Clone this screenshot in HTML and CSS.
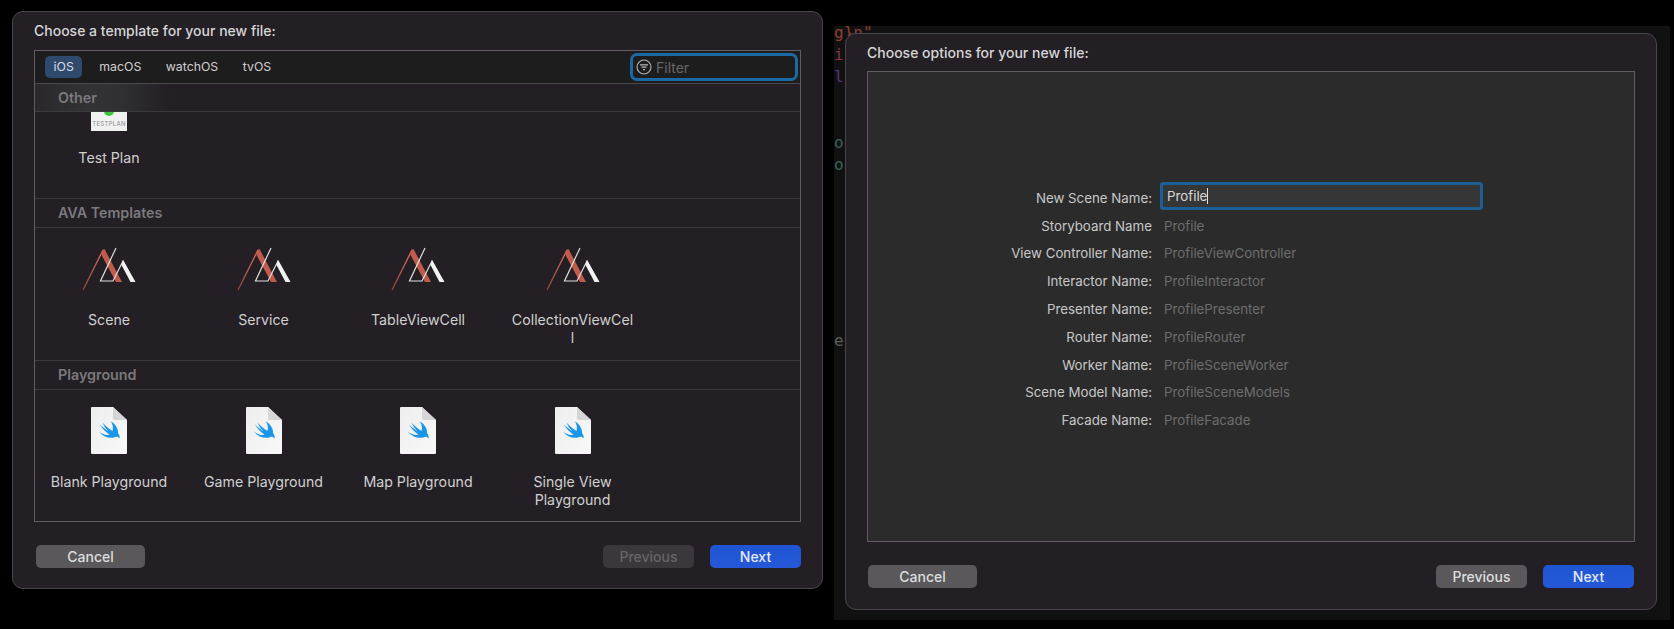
FILE: index.html
```html
<!DOCTYPE html>
<html lang="en">
<head>
  <meta charset="UTF-8" />
  <title>New file</title>
  <link rel="stylesheet" href="styles.css">
</head>
<body>
  <svg class="defs" width="0" height="0">
    <defs>
      <linearGradient id="red" x1="0" y1="1" x2="0.4" y2="0">
        <stop offset="0" stop-color="#8f4a3e" />
        <stop offset="1" stop-color="#d0675a" />
      </linearGradient>
      <linearGradient id="page" x1="0" y1="0" x2="1" y2="1">
        <stop offset="0" stop-color="#eeeeef" />
        <stop offset="1" stop-color="#f8f8f8" />
      </linearGradient>
      <symbol id="logo" viewBox="11 4 56 47">
        <path d="M13 49 L33 9" stroke="url(#red)" stroke-width="1.3" fill="none" />
        <path d="M32 9 L34.5 8 L52 41 L46 41 L31 13 Z" fill="#c05c4c" />
        <path d="M46 7 L30.5 40 L43 40 L53 20 L64 40.5" stroke="#e0e0e0" stroke-width="1.2" fill="none" />
        <path d="M53 19 L65.5 41 L60.5 41 L51.5 24 Z" fill="#f2f2f2" />
      </symbol>
      <symbol id="swiftdoc" viewBox="0 0 36 47">
        <path d="M0 1 Q0 0 1 0 L22 0 L36 13 L36 46 Q36 47 35 47 L1 47 Q0 47 0 46 Z" fill="url(#page)" />
        <path d="M22 0 L36 13 L24 13 Q22 13 22 11 Z" fill="#d6d6d8" />
        <g transform="translate(7.5 14)">
          <path d="M0.5 10.5 C4 13.5 8 14.5 11 13.5 C7 11 3.5 7 1.5 3.5 C4.5 6.5 8 9 10 10.5 C7.5 8 5.5 5 4 1.5 C7 5 10.5 8 14 10 C15 6 14 3 12.5 0.5 C17 3 20 8 19.5 12 C21 14 21.5 16 21 17.5 C19.5 15.5 18 15.5 16.5 16.2 C11 18 4.5 16 0.5 10.5 Z" fill="#1b96e6" />
        </g>
      </symbol>
    </defs>
  </svg>

  <div class="dialog dialog-template">
    <h2 class="title">Choose a template for your new file:</h2>
    <div class="panel">
      <div class="toolbar">
        <div class="tabs">
          <span class="tab tab-active">iOS</span>
          <span class="tab">macOS</span>
          <span class="tab">watchOS</span>
          <span class="tab">tvOS</span>
        </div>
        <div class="filter">
          <svg class="filter-icon" viewBox="0 0 16 16" width="16" height="16">
            <circle cx="8" cy="8" r="7" stroke="#b5b5b5" stroke-width="1.1" fill="none" />
            <path d="M4 5.8H12M5.5 8.2H10.5M7 10.6H9" stroke="#b5b5b5" stroke-width="1.2" />
          </svg>
          <span>Filter</span>
        </div>
      </div>

      <div class="section-head section-head-other">Other</div>
      <div class="items items-other">
        <div class="item">
          <div class="testplan">
            <span class="testplan-dot"></span>
            <span class="testplan-text">TESTPLAN</span>
          </div>
          <div class="item-label">Test Plan</div>
        </div>
      </div>

      <div class="section-head">AVA Templates</div>
      <div class="items">
        <div class="item">
          <svg class="icon"><use href="#logo" /></svg>
          <div class="item-label">Scene</div>
        </div>
        <div class="item">
          <svg class="icon"><use href="#logo" /></svg>
          <div class="item-label">Service</div>
        </div>
        <div class="item">
          <svg class="icon"><use href="#logo" /></svg>
          <div class="item-label">TableViewCell</div>
        </div>
        <div class="item">
          <svg class="icon"><use href="#logo" /></svg>
          <div class="item-label">CollectionViewCel<br>l</div>
        </div>
      </div>

      <div class="section-head">Playground</div>
      <div class="items">
        <div class="item">
          <svg class="icon"><use href="#swiftdoc" /></svg>
          <div class="item-label">Blank Playground</div>
        </div>
        <div class="item">
          <svg class="icon"><use href="#swiftdoc" /></svg>
          <div class="item-label">Game Playground</div>
        </div>
        <div class="item">
          <svg class="icon"><use href="#swiftdoc" /></svg>
          <div class="item-label">Map Playground</div>
        </div>
        <div class="item">
          <svg class="icon"><use href="#swiftdoc" /></svg>
          <div class="item-label">Single View<br>Playground</div>
        </div>
      </div>
    </div>
    <div class="footer footer-template">
      <button class="btn">Cancel</button>
      <div class="footer-right">
        <button class="btn btn-disabled">Previous</button>
        <button class="btn btn-next">Next</button>
      </div>
    </div>
  </div>

  <div class="backdrop">
    <div class="code">
      <span class="c-red">g}n"</span>
      <span class="c-pink">i</span>
      <span class="c-purple">l</span>
      <span></span>
      <span></span>
      <span class="c-green">o</span>
      <span class="c-green">o</span>
      <span></span><span></span><span></span><span></span><span></span><span></span><span></span>
      <span class="c-grey">e</span>
    </div>
    <div class="dialog dialog-options">
      <h2 class="title title-options">Choose options for your new file:</h2>
      <div class="panel panel-options">
        <div class="form">
          <div class="form-label">New Scene Name:</div>
          <div class="name-input">Profile<span class="caret"></span></div>
          <div class="form-label">Storyboard Name</div>
          <div class="form-value">Profile</div>
          <div class="form-label">View Controller Name:</div>
          <div class="form-value">ProfileViewController</div>
          <div class="form-label">Interactor Name:</div>
          <div class="form-value">ProfileInteractor</div>
          <div class="form-label">Presenter Name:</div>
          <div class="form-value">ProfilePresenter</div>
          <div class="form-label">Router Name:</div>
          <div class="form-value">ProfileRouter</div>
          <div class="form-label">Worker Name:</div>
          <div class="form-value">ProfileSceneWorker</div>
          <div class="form-label">Scene Model Name:</div>
          <div class="form-value">ProfileSceneModels</div>
          <div class="form-label">Facade Name:</div>
          <div class="form-value">ProfileFacade</div>
        </div>
      </div>
      <div class="footer">
        <button class="btn">Cancel</button>
        <div class="footer-right">
          <button class="btn">Previous</button>
          <button class="btn btn-next">Next</button>
        </div>
      </div>
    </div>
  </div>
</body>
</html>
```

FILE: styles.css
```css
* {
  box-sizing: border-box;
}
html, body {
  height: 100%;
}
body {
  margin: 0;
  background: #000;
  font-family: Inter, "Noto Sans", sans-serif;
  font-size: 13px;
  color: #d4d4d4;
  display: flex;
  align-items: flex-start;
  overflow: hidden;
}
.defs {
  position: absolute;
}

.dialog {
  background: #231f24;
  border: 1px solid #48464a;
  border-radius: 11px;
  padding: 0 21px;
  display: flex;
  flex-direction: column;
}
.dialog-template {
  width: 811px;
  height: 578px;
  margin: 11px 11px 0 12px;
}
.dialog-options {
  position: relative;
  width: 812px;
  height: 577px;
  margin-top: 7px;
  flex: none;
}
.backdrop {
  width: 836px;
  height: 594px;
  margin-top: 26px;
  background: #111;
  display: flex;
  flex: none;
}
.code {
  width: 11px;
  flex: none;
  margin-top: -4px;
  display: flex;
  flex-direction: column;
  font-family: "DejaVu Sans Mono", monospace;
  font-size: 16px;
  white-space: nowrap;
}
.code span {
  height: 22px;
  line-height: 22px;
}
.c-red { color: #8f3f33; }
.c-pink { color: #8a3350; }
.c-purple { color: #52367a; }
.c-green { color: #386358; }
.c-grey { color: #5c5c5c; }

.title {
  margin: 0;
  height: 38px;
  padding-top: 10px;
  font-size: 14px;
  line-height: 18px;
  font-weight: 500;
  color: #d6d6d6;
}
.title-options {
  height: 37px;
}
.panel {
  height: 472px;
  border: 1px solid #605e61;
  display: flex;
  flex-direction: column;
}
.panel-options {
  height: 471px;
  background: #2b2b2b;
}

.toolbar {
  height: 33px;
  flex: none;
  background: #1e1d1e;
  border-bottom: 1px solid #4a484b;
  display: flex;
  align-items: center;
  justify-content: space-between;
  padding: 0 2px 0 10px;
}
.tabs {
  display: flex;
  font-size: 12.3px;
}
.tab {
  padding: 0 12px;
  height: 22px;
  line-height: 22px;
  border-radius: 5px;
  color: #d0d0d0;
  margin-right: 0.5px;
}
.tab-active {
  padding: 0 8.5px;
  background: #2f4a6d;
  color: #d6dde6;
  margin-right: 5px;
}
.filter {
  width: 168px;
  height: 28px;
  border: 3px solid #1b6aa6;
  border-radius: 7px;
  background: #1e1d1e;
  display: flex;
  align-items: center;
  gap: 4px;
  padding-left: 3px;
  color: #686668;
  font-size: 14px;
}

.section-head {
  height: 30px;
  flex: none;
  padding-left: 23px;
  line-height: 28px;
  font-size: 14.3px;
  font-weight: 600;
  color: #7b797c;
  border-top: 1px solid #3c3a3d;
  border-bottom: 1px solid #3c3a3d;
}
.section-head-other {
  height: 28px;
  border-top: none;
  line-height: 27px;
  background: linear-gradient(90deg, #2a282b 0, #333335 60px, #2f2f31 90px, #231f24 135px);
}
.items {
  flex: 1;
  display: flex;
  gap: 30.5px;
  padding: 17px 0 0 12px;
  overflow: hidden;
}
.items-other {
  flex: none;
  height: 86px;
  padding-top: 0;
}
.items-other .item-label {
  margin-top: 18px;
}
.item {
  width: 124px;
  flex: none;
  display: flex;
  flex-direction: column;
  align-items: center;
}
.icon {
  width: 56px;
  height: 47px;
  flex: none;
}
.item-label {
  margin-top: 19px;
  font-size: 14.2px;
  line-height: 18px;
  text-align: center;
  color: #d0d0d0;
  white-space: nowrap;
}
.testplan {
  position: relative;
  width: 36px;
  height: 19px;
  background: #f1f1f2;
  overflow: hidden;
  text-align: center;
}
.testplan-dot {
  position: absolute;
  left: 13px;
  top: -6px;
  width: 10px;
  height: 10px;
  border-radius: 50%;
  background: #3fc23a;
}
.testplan-text {
  display: block;
  padding-top: 7px;
  font-size: 6px;
  line-height: 9px;
  letter-spacing: 0.3px;
  color: #8a8a8a;
}

.footer {
  display: flex;
  justify-content: space-between;
  padding: 23px 1px 0 1px;
}
.footer-template {
  padding: 23px 0 0 2px;
}
.footer-right {
  display: flex;
  gap: 16px;
}
.btn {
  width: 109px;
  height: 22.5px;
  border: none;
  border-radius: 5px;
  background: #5a585b;
  color: #dedede;
  font-family: inherit;
  font-size: 14px;
  font-weight: 500;
  padding: 0;
}
.footer-right .btn {
  width: 91px;
}
.btn-disabled {
  background: #3a383b;
  color: #676568;
}
.btn-next {
  background: linear-gradient(#1f55d3, #2458d8);
  color: #e4eaf8;
}

.form {
  display: grid;
  grid-template-columns: 284px 1fr;
  grid-auto-rows: 27.8px;
  column-gap: 12px;
  align-items: center;
  padding-top: 112px;
  font-size: 13.3px;
}
.form-label {
  text-align: right;
  color: #c8c8c8;
  white-space: nowrap;
}
.form-value {
  color: #6d6d6d;
}
.name-input {
  width: 323px;
  height: 28px;
  margin: -4px 0 0 -4px;
  padding-left: 4px;
  border: 3px solid #1c5f97;
  border-radius: 3px;
  background: #363636;
  color: #d8d8d8;
  line-height: 23px;
}
.caret {
  display: inline-block;
  width: 1px;
  height: 16px;
  background: #e0e0e0;
  vertical-align: -3px;
}
```
